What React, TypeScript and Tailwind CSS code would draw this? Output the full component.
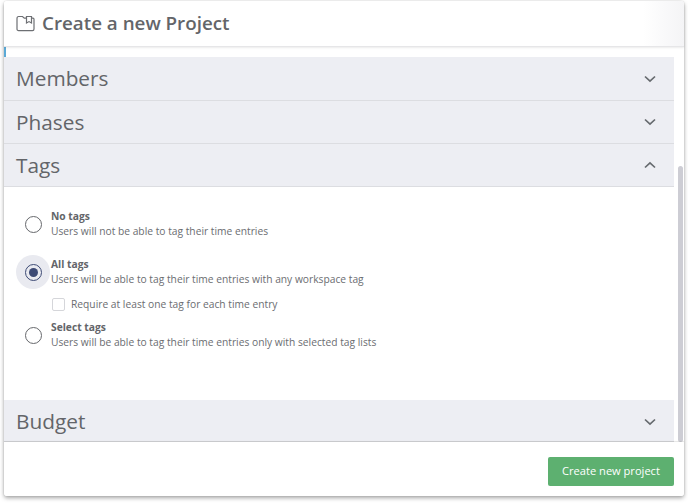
import React from 'react';

const Chevron = ({ up }: { up?: boolean }) => (
  <svg width="12" height="8" viewBox="0 0 12 8" fill="none" className="text-[#666a6e]">
    <path d={up ? 'M1 6.5L6 1.8L11 6.5' : 'M1 1.5L6 6.2L11 1.5'} stroke="currentColor" strokeWidth="1.7" />
  </svg>
);

const Section = ({ title, up, h }: { title: string; up?: boolean; h: string }) => (
  <div className={`${h} shrink-0 flex items-center justify-between bg-[#edeef3] border-b border-[#dcdde1] pl-[12px] pr-[18px]`}>
    <span className="text-[20.8px] leading-none text-[#636569]">{title}</span>
    <Chevron up={up} />
  </div>
);

const Radio = ({ checked }: { checked?: boolean }) => (
  <div className={`w-[34px] h-[34px] rounded-full flex items-center justify-center shrink-0 ${checked ? 'bg-[#e9eaf0]' : ''}`}>
    <div className={`w-[17px] h-[17px] rounded-full border-[1.5px] flex items-center justify-center ${checked ? 'border-[#3d4a75]' : 'border-[#66686c]'}`}>
      {checked && <div className="w-[9px] h-[9px] rounded-full bg-[#3d4a75]" />}
    </div>
  </div>
);

const Option = ({ title, text, checked, className }: { title: string; text: string; checked?: boolean; className: string }) => (
  <div className={`flex items-center ${className}`}>
    <Radio checked={checked} />
    <div className="ml-px text-[10.25px] leading-[15px]">
      <div className="font-bold text-[#636569]">{title}</div>
      <div className="text-[#6b6d71]">{text}</div>
    </div>
  </div>
);

export default function App() {
  return (
    <div className="h-[503px] w-[688px] bg-white pt-px pl-[4px] pr-[4px] font-['Open_Sans',sans-serif]">
      <div className="h-[495px] w-[680px] bg-white rounded-[3px] flex flex-col relative shadow-[0_2px_4px_rgba(0,0,0,0.35),0_0_2px_rgba(0,0,0,0.12)]">
        <div className="h-[46px] shrink-0 flex items-center pl-[12px] pb-px gap-[7px] border-b border-[#e6e6e8] shadow-[0_1px_2px_rgba(0,0,0,0.08)] relative z-10 bg-gradient-to-r from-white from-[94%] to-[#f4f4f6] rounded-t-[3px]">
          <svg width="19" height="17" viewBox="0 0 19 17" fill="none" stroke="#6d6f73" strokeWidth="1.2">
            <path d="M1 3.5C1 2.4 1.6 1.5 2.6 1.5H6.5L8.3 3.2H17C17.6 3.2 18 3.7 18 4.3V14C18 15 17.4 15.6 16.5 15.6H2.6C1.6 15.6 1 15 1 14Z" />
            <path d="M10.5 1.5H15.5V8L13 6.6L10.5 8Z" fill="#fff" />
          </svg>
          <span className="text-[18.8px] leading-none font-semibold text-[#636569]">Create a new Project</span>
        </div>

        <div className="flex-1 min-h-0 flex flex-col pr-[10px]">
          <div className="h-[10px] shrink-0 border-l-2 border-[#5aa9d6]" />
          <Section title="Members" h="h-[44px]" />
          <Section title="Phases" h="h-[43px]" />
          <Section title="Tags" up h="h-[43px]" />
          <div className="h-[213px] shrink-0 pl-[12px] pt-[20px]">
            <Option title="No tags" text="Users will not be able to tag their time entries" className="h-[34px]" />
            <Option title="All tags" text="Users will be able to tag their time entries with any workspace tag" checked className="h-[34px] mt-[14px]" />
            <div className="flex items-center h-[16px] ml-[36px] mt-[7px]">
              <div className="w-[13px] h-[13px] rounded-[2px] border border-[#d5d6da] bg-white" />
              <span className="ml-[6px] text-[10.25px] leading-none text-[#6b6d71]">Require at least one tag for each time entry</span>
            </div>
            <Option title="Select tags" text="Users will be able to tag their time entries only with selected tag lists" className="h-[34px] mt-[6px]" />
          </div>
          <Section title="Budget" h="h-[42px] pt-[2px]" />
        </div>

        <div className="h-[54px] shrink-0 flex items-center justify-end pr-[10px] pt-[4px] shadow-[0_-1px_1px_rgba(0,0,0,0.1)] relative z-10 bg-white rounded-b-[3px]">
          <button className="w-[126px] h-[29px] rounded-[2px] bg-[#5db070] text-white text-[11.1px] leading-none">Create new project</button>
        </div>

        <div className="absolute right-[1px] top-[165px] w-[5px] h-[276px] rounded-full bg-[#cdcdd4]" />
      </div>
    </div>
  );
}
